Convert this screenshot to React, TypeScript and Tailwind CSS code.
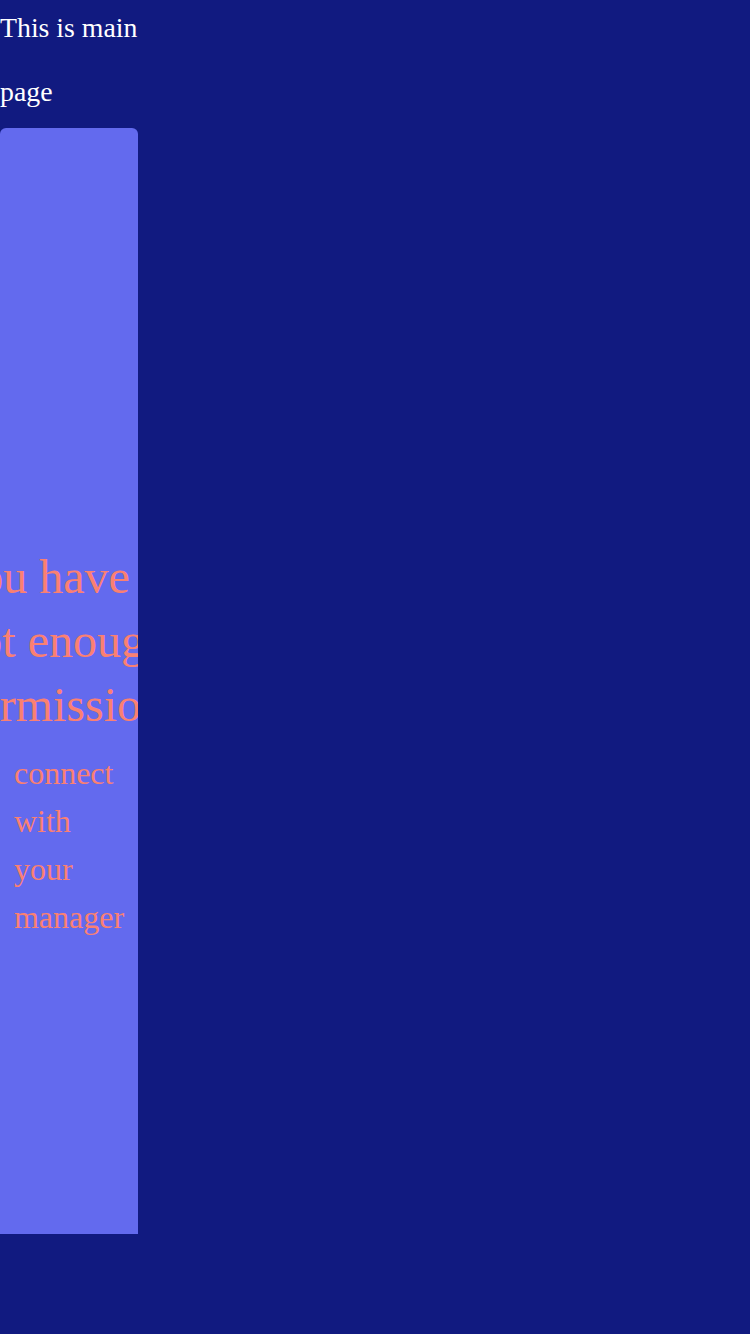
import React from 'react';

const serif = { fontFamily: '"Liberation Serif", "Times New Roman", serif' };

const App = () => {
  return (
    <div className="min-h-screen bg-[#111a80]" style={serif}>
      <div className="w-[138px]">
        <div className="h-[128px] flex flex-col">
          <h2 className="-mt-1 text-[27.8px] leading-[64px] text-white">This is main page</h2>
        </div>

        {/* permission notice */}
        <div className="h-[1106px] rounded-t-md bg-[#636aee] overflow-hidden flex flex-col items-center justify-center px-4 pt-[124px]">
          <h1 className="-indent-[5px] text-[48px] leading-[64px] text-[#fa8072]">
            You have not enough permissions
          </h1>
          <p className="mt-3 text-[32px] leading-[48px] text-[#fa8072]">
            connect with your manager
          </p>
        </div>
      </div>
    </div>
  );
};

export default App;
